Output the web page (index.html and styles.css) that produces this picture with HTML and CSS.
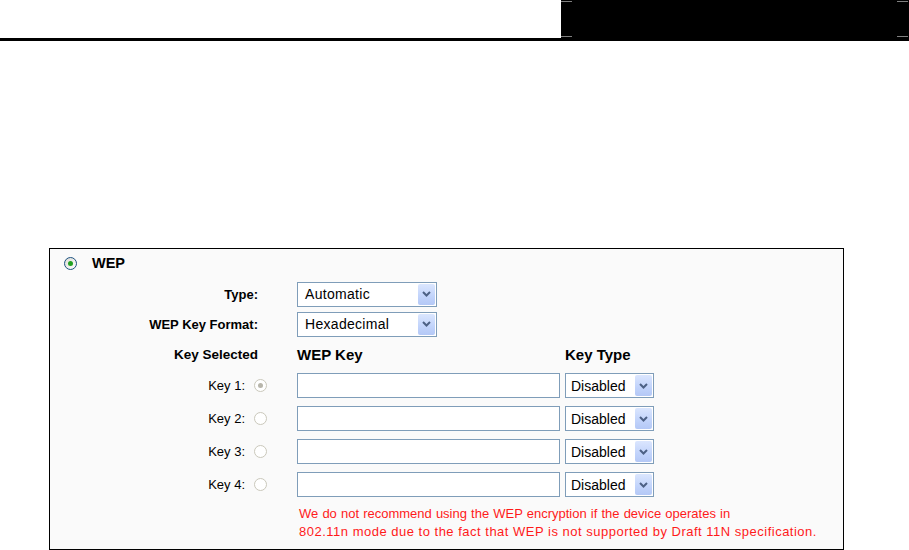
FILE: index.html
```html
<!DOCTYPE html>
<html>
<head>
<meta charset="utf-8">
<link rel="stylesheet" href="styles.css">
</head>
<body>
<div class="topbar">
  <div class="spacer"></div>
  <div class="blackbox"><span class="mark tl"></span><span class="mark tr"></span><span class="mark bl"></span><span class="mark br"></span></div>
</div>
<div class="panel">
  <div class="wep-row">
    <span class="radio on"></span><span class="wep-title">WEP</span>
  </div>
  <div class="row">
    <div class="label bold">Type:</div>
    <div class="select wide"><span class="val">Automatic</span><span class="btn"><svg width="9" height="6" viewBox="0 0 9 6"><path d="M1 1 L4.5 4.5 L8 1" fill="none" stroke="#4d6185" stroke-width="2"/></svg></span></div>
  </div>
  <div class="row">
    <div class="label bold">WEP Key Format:</div>
    <div class="select wide"><span class="val">Hexadecimal</span><span class="btn"><svg width="9" height="6" viewBox="0 0 9 6"><path d="M1 1 L4.5 4.5 L8 1" fill="none" stroke="#4d6185" stroke-width="2"/></svg></span></div>
  </div>
  <div class="row head">
    <div class="label bold">Key Selected</div>
    <div class="col-key bold">WEP Key</div>
    <div class="col-type bold">Key Type</div>
  </div>
  <div class="row key">
    <div class="label keylabel"><span>Key 1:</span><span class="radio dis checked"></span></div>
    <div class="text"></div>
    <div class="select narrow"><span class="val">Disabled</span><span class="btn"><svg width="9" height="6" viewBox="0 0 9 6"><path d="M1 1 L4.5 4.5 L8 1" fill="none" stroke="#4d6185" stroke-width="2"/></svg></span></div>
  </div>
  <div class="row key">
    <div class="label keylabel"><span>Key 2:</span><span class="radio dis"></span></div>
    <div class="text"></div>
    <div class="select narrow"><span class="val">Disabled</span><span class="btn"><svg width="9" height="6" viewBox="0 0 9 6"><path d="M1 1 L4.5 4.5 L8 1" fill="none" stroke="#4d6185" stroke-width="2"/></svg></span></div>
  </div>
  <div class="row key">
    <div class="label keylabel"><span>Key 3:</span><span class="radio dis"></span></div>
    <div class="text"></div>
    <div class="select narrow"><span class="val">Disabled</span><span class="btn"><svg width="9" height="6" viewBox="0 0 9 6"><path d="M1 1 L4.5 4.5 L8 1" fill="none" stroke="#4d6185" stroke-width="2"/></svg></span></div>
  </div>
  <div class="row key">
    <div class="label keylabel"><span>Key 4:</span><span class="radio dis"></span></div>
    <div class="text"></div>
    <div class="select narrow"><span class="val">Disabled</span><span class="btn"><svg width="9" height="6" viewBox="0 0 9 6"><path d="M1 1 L4.5 4.5 L8 1" fill="none" stroke="#4d6185" stroke-width="2"/></svg></span></div>
  </div>
  <div class="warning"><span class="line1">We do not recommend using the WEP encryption if the device operates in</span><br><span class="line2">802.11n mode due to the fact that WEP is not supported by Draft 11N specification.</span></div>
</div>
</body>
</html>
```
FILE: styles.css
```css
* { box-sizing: border-box; }
html, body { margin: 0; padding: 0; background: #fff; }
body {
  font-family: "Liberation Sans", Arial, sans-serif;
  font-size: 13px;
  color: #000;
  width: 909px;
  height: 550px;
  overflow: hidden;
}
.topbar {
  display: flex;
  height: 41px;
  border-bottom: 3px solid #000;
}
.spacer { flex: 1; }
.blackbox {
  position: relative;
  width: 348px;
  height: 38px;
  background: #000;
}
.mark {
  position: absolute;
  width: 11px;
  height: 1px;
  background: #808080;
}
.mark.tl { left: 0; top: 1px; }
.mark.tr { right: 1px; top: 1px; }
.mark.bl { left: 0; bottom: 1px; }
.mark.br { right: 1px; bottom: 1px; }

.panel {
  margin: 207px 0 0 49px;
  width: 795px;
  height: 302px;
  border: 1px solid #000;
  background: #fafafa;
}
.wep-row {
  display: flex;
  align-items: center;
  height: 22px;
  margin: 3px 0 5px 14px;
}
.wep-title {
  font-weight: bold;
  font-size: 14.5px;
  margin-left: 15px;
}
.radio {
  display: inline-block;
  width: 13px;
  height: 13px;
  border-radius: 50%;
  border: 1px solid #1c5180;
  background: linear-gradient(135deg, #dcdcd6, #ffffff);
  position: relative;
}
.radio.on::after, .radio.checked::after {
  content: "";
  position: absolute;
  left: 3px; top: 3px;
  width: 5px; height: 5px;
  border-radius: 50%;
  background: #21a121;
}
.radio.dis {
  border-color: #cac8bb;
  background: #fff;
}
.radio.dis.checked::after { background: #b8b6ab; }

.row {
  display: flex;
  align-items: center;
  height: 30px;
}
.row.head { height: 30px; }
.row.key { height: 33px; }
.label {
  width: 208px;
  text-align: right;
  margin-right: 39px;
}
.bold { font-weight: bold; }
.row.head .label { font-size: 13.5px; }
.keylabel {
  display: flex;
  justify-content: flex-end;
  align-items: center;
  gap: 9px;
  margin-right: 30px;
  width: 217px;
}
.col-key { width: 268px; font-size: 15px; }
.col-type { font-size: 15px; }

.select {
  display: flex;
  align-items: center;
  height: 25px;
  border: 1px solid #7f9db9;
  background: #fff;
  font-size: 14px;
  padding: 2px 1px 2px 7px;
}
.select .val { flex: 1; }
.select.wide .val { letter-spacing: 0.3px; }
.select .btn {
  width: 17px;
  height: 21px;
  display: flex;
  align-items: center;
  justify-content: center;
  background: linear-gradient(180deg, #dbe6fe 0%, #c1d3fb 60%, #b4c8f6 100%);
  border-radius: 2px;
}
.select.wide { width: 140px; }
.select.narrow { width: 89px; padding-left: 5px; }

.text {
  width: 263px;
  height: 25px;
  border: 1px solid #7f9db9;
  background: #fff;
  margin-right: 5px;
}

.warning {
  margin: 4px 0 0 249px;
  color: #ff1a1a;
  line-height: 18px;
  font-size: 13px;
}
.line1 { word-spacing: 0.5px; }
.line2 { letter-spacing: 0.5px; }
```
